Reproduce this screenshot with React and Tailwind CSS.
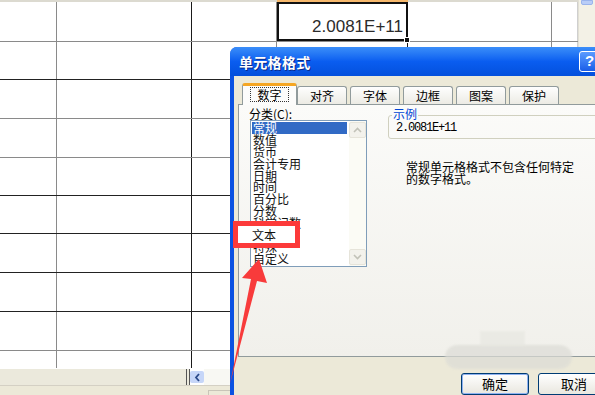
import React from 'react';

const cols = [57, 135, 85, 131, 144, 26];
const rowHeights = [40, 38, 39, 39, 38, 38, 39, 39, 39, 18];
const rowLines = ['#8a8a8a', '#222', '#8a8a8a', '#8a8a8a', '#222', '#222', '#222', '#222', '#8a8a8a', 'transparent'];
const colLines = ['#8a8a8a', '#1a1a1a', '#8a8a8a', '#1a1a1a', '#8a8a8a', '#cfcfcf'];

const categories = ['常规', '数值', '货币', '会计专用', '日期', '时间', '百分比', '分数', '科学记数', '文本', '特殊', '自定义'];
const tabs = ['对齐', '字体', '边框', '图案', '保护'];

const Chevron = ({ up }) => (
  <svg width="9" height="6" viewBox="0 0 9 6">
    <path d={up ? 'M1 5 L4.5 1.5 L8 5' : 'M1 1 L4.5 4.5 L8 1'} fill="none" stroke="#c2c2b8" strokeWidth="1.6" />
  </svg>
);

const Sheet = () => (
  <div className="flex flex-col h-[369px] w-[578px]">
    {/* column header strip */}
    <div className="flex h-[2px] shrink-0">
      <div className="w-[277px] bg-[#dcdad0]" />
      <div className="w-[131px] bg-[#f6b86c]" />
      <div className="flex-1 bg-[#dcdad0]" />
    </div>
    {rowHeights.map((h, r) => (
      <div key={r} className="flex shrink-0" style={{ height: h, borderBottom: `1px solid ${rowLines[r]}` }}>
        {cols.map((w, c) =>
          r === 0 && c === 3 ? (
            <div key={c} className="relative flex items-end justify-end border-2 border-[#111] pr-[3px] pb-[2px]" style={{ width: w }}>
              <span className="font-['Liberation_Sans'] text-[17px] leading-[20px] text-[#2b2b2b]">2.0081E+11</span>
              <div className="absolute -right-[4px] -bottom-[4px] h-[6px] w-[6px] bg-[#111] border border-white" />
            </div>
          ) : (
            <div key={c} style={{ width: w, borderRight: `1px solid ${colLines[c]}` }} />
          )
        )}
      </div>
    ))}
  </div>
);

const Dialog = () => (
  <div className="absolute left-[230px] top-[47px] w-[380px] h-[360px] rounded-tl-[7px] bg-[#0b52e2] overflow-hidden">
    {/* Title bar */}
    <div className="flex items-center h-[29px] pl-[9px] pr-[10px] bg-linear-to-b from-[#3b8ef9] via-[#0a5df0] to-[#0450dc]">
      <span className="text-white font-bold text-[14px] leading-none tracking-[0.3px] [text-shadow:1px_1px_0_#0a2a8a]">单元格格式</span>
      <div className="ml-auto flex items-center justify-center w-[21px] h-[21px] rounded-[3px] border border-white bg-linear-to-b from-[#5a9bff] to-[#1a5de8] text-white font-['Liberation_Sans'] font-bold text-[15px]">?</div>
    </div>

    {/* Body */}
    <div className="ml-[4px] h-[331px] bg-[#ece9d8] pl-[4px] pt-[7px]">
      {/* Tabs */}
      <div className="flex items-end h-[21px] pl-[4px] gap-[3px]">
        <div className="relative z-10 -mb-[1px] w-[55px] h-[22px] bg-[#fcfcfb] border border-[#919b9c] border-b-0 rounded-t-[3px] border-t-[3px] border-t-[#f5a623] flex items-start justify-center pt-[1px] -mr-[3px]">
          <span className="px-[6px] border border-dotted border-[#333] text-[12px] leading-[13px] text-black">数字</span>
        </div>
        {tabs.map((t) => (
          <div key={t} className="w-[50px] h-[18px] border border-[#919b9c] border-b-0 rounded-t-[3px] bg-linear-to-b from-[#fefefe] to-[#ecebe4] flex items-center justify-center text-[12px] text-black">
            {t}
          </div>
        ))}
      </div>

      {/* Panel */}
      <div className="h-[253px] border border-[#919b9c] bg-linear-to-b from-[#fbfbf9] to-[#f1f0eb] flex pl-[10px] pt-[2px]">
        <div className="flex flex-col w-[118px]">
          <div className="h-[13px] text-[12px] leading-[13px] text-black">分类(<span className="underline">C</span>):</div>
          <div className="ml-[1px] w-[117px] h-[147px] border border-[#7f9db9] bg-white flex">
            <div className="flex-1 p-[1px] pr-[2px]">
              {categories.map((c, i) => (
                <div key={c} className={`h-[11.9px] text-[12px] leading-[12px] pl-[1px] whitespace-nowrap ${i === 0 ? 'bg-[#316ac5] text-white' : 'text-[#111]'}`}>
                  {c === '文本' ? '' : c}
                </div>
              ))}
            </div>
            <div className="w-[17px] bg-[#fbfbf5] flex flex-col justify-between py-[1px]">
              <div className="h-[16px] rounded-[2px] border border-[#e6e4da] bg-[#f3f2ec] flex items-center justify-center"><Chevron up /></div>
              <div className="h-[16px] rounded-[2px] border border-[#e6e4da] bg-[#f3f2ec] flex items-center justify-center"><Chevron /></div>
            </div>
          </div>
        </div>

        <div className="ml-[21px] mt-[8px] flex flex-col">
          <div className="relative w-[230px] h-[24px] border border-[#d0d0bf] rounded-[3px] flex items-center pl-[7px]">
            <span className="absolute -top-[9px] left-[3px] px-[1px] bg-[#fbfbf9] text-[#0046d5] text-[12px] leading-[14px]">示例</span>
            <span className="font-['Liberation_Mono'] text-[12px] tracking-[-1.2px] text-black mt-[1px]">2.0081E+11</span>
          </div>
          <div className="ml-[18px] mt-[22px] text-[12px] leading-[12px] text-black">
            <div>常规单元格格式不包含任何特定</div>
            <div>的数字格式。</div>
          </div>
        </div>
      </div>

      {/* Buttons */}
      <div className="flex mt-[16px] ml-[223px] gap-[9px]">
        <div className="w-[71px] h-[22px] rounded-[3px] border border-[#003c74] bg-linear-to-b from-[#ffffff] to-[#e9e7df] shadow-[inset_0_0_0_1px_#8fb2f0] flex items-center justify-center text-[13px] text-black">确定</div>
        <div className="w-[75px] h-[22px] rounded-[3px] border border-[#003c74] bg-linear-to-b from-[#ffffff] to-[#e9e7df] flex items-center justify-center text-[13px] text-black">取消</div>
      </div>
    </div>
  </div>
);

export default function App() {
  return (
    <div className="relative w-[595px] h-[395px] overflow-hidden bg-white font-['Noto_Sans_CJK_SC',sans-serif]">
      <div className="flex flex-col h-full">
        <div className="flex h-[369px]">
          <Sheet />
          <div className="w-[17px] bg-[#f3f1e6] border-l border-[#e2e0d4] px-[2px]">
            <div className="h-[5px] rounded-b-[2px] bg-[#b9cdf7] border border-[#9ab4ec]" />
          </div>
        </div>
        <div className="flex h-[16px]">
          <div className="w-[186px] bg-[#ebe9dc]" />
          <div className="w-[4px] bg-[#ebe9dc] border-l border-r border-[#555]" />
          <div className="w-[14px] my-[2px] rounded-[2px] bg-[#c6d6f8] flex items-center justify-center">
            <svg width="7" height="9" viewBox="0 0 7 9"><path d="M5 1 L2 4.5 L5 8" fill="none" stroke="#2b4a8a" strokeWidth="1.8" /></svg>
          </div>
          <div className="flex-1 bg-[#f8f8f3]" />
        </div>
        <div className="flex-1 bg-[#ece9d8] border-t border-[#d4d0c4] flex items-end">
          <div className="ml-[208px] w-[24px] h-[5px] border-l border-t border-[#c9c5b8]" />
        </div>
      </div>

      <Dialog />

      {/* watermark blur */}
      <div className="absolute left-[445px] top-[345px] w-[127px] h-[24px] rounded-full bg-[#dcdcd6] opacity-70 blur-[1px]" />
      <div className="absolute left-[480px] top-[331px] w-[45px] h-[15px] bg-[#e6e6e0] opacity-60 blur-[1px]" />

      {/* red highlight box */}
      <div className="absolute left-[233px] top-[221px] w-[67px] h-[27px] border-[5px] border-[#fc3a3a] bg-white pl-[14px] pt-[3px]">
        <span className="text-[12px] leading-[12px] text-[#111] block">文本</span>
      </div>

      {/* red arrow */}
      <svg className="absolute inset-0 pointer-events-none" width="595" height="395" viewBox="0 0 595 395">
        <polygon points="259,259 267,283 257,281 230,384 251,279 242,278" fill="#f83b3b" />
      </svg>
    </div>
  );
}
